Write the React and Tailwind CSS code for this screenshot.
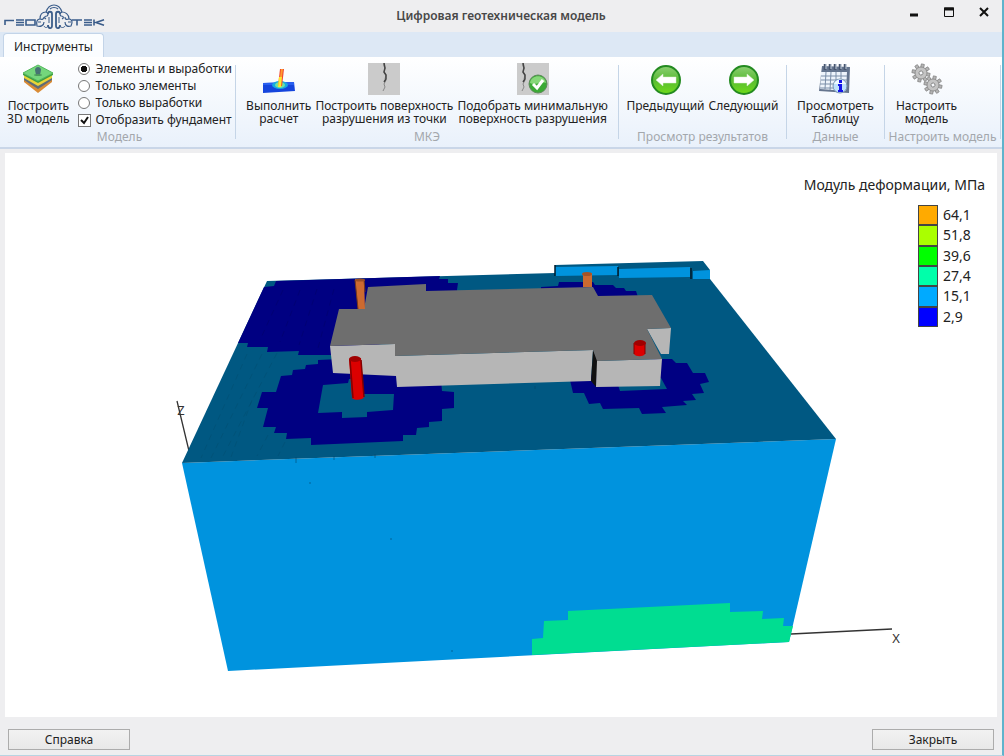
import React, { useState } from "react";

const legend = [
  { value: "64,1", color: "bg-[#ffaa00]" },
  { value: "51,8", color: "bg-[#aaff00]" },
  { value: "39,6", color: "bg-[#00ff00]" },
  { value: "27,4", color: "bg-[#00ffaa]" },
  { value: "15,1", color: "bg-[#00aaff]" },
  { value: "2,9", color: "bg-[#0000ff]" },
];

const viewModes = [
  { id: "all", label: "Элементы и выработки" },
  { id: "elements", label: "Только элементы" },
  { id: "holes", label: "Только выработки" },
];

function Logo() {
  return (
    <svg viewBox="0 0 102 26" className="h-[26px] w-[102px]" fill="none" stroke="#3a5c8a">
      <g strokeWidth="1.6">
        <path d="M1 21V16.500H10" />
        <path d="M12 16H20M12 18.500H20M12 21H20" />
        <path d="M22 16H31V21H22Z" />
        <path d="M68 16H78M73 16V21.500" />
        <path d="M80 16H88M80 18.500H88M80 21H88" />
        <path d="M90 15.500V21.500M100 15.800L92 18.500L100 21.200" />
      </g>
      <g strokeWidth="1.200">
        {/* dome over the two lobes */}
        <path d="M36 15C36 10 39 8 42 8C44 2 47 1 50 1C53 1 56 2 58 8C61 8 65 10 65 15" />
        <path d="M36 15C33 15 32 18 33 22C36 23 40 22 40 18M65 15C68 15 69 18 67 22C64 23 61 22 61 18" />
        <path d="M34 18H37M64 18H67M42 8C44 9 45 10 43 12C40 12 40 14 42 15M58 8C56 9 55 10 57 12C60 12 60 14 58 15" />
        <path d="M36 15C38 16 40 15 40 13M65 15C62 16 61 15 61 13M46 5C48 3 52 3 54 5" />
      </g>
      <path d="M44 21C44 25 48 25 48 22V10C48 7 44 7 44 10M56 21C56 25 52 25 52 22V10C52 7 56 7 56 10" strokeWidth="1.800" />
      <path d="M40 22C41 24 43 24 44 22M61 22C60 24 57 24 56 22M45 13V19M55 13V19" />
    </svg>
  );
}

function SoilIcon() {
  return (
    <svg viewBox="0 0 32 32" className="size-8">
      <path d="M2 19L16 30L30 19V14L16 20L2 14Z" fill="#d98b35" />
      <path d="M2 17L16 26L30 17V13L16 22L2 13Z" fill="#5e6c78" />
      <path d="M2 15L16 23L30 15V11L16 19L2 11Z" fill="#e8d438" />
      <path d="M1 12L16 20L31 12V10L16 17L1 10Z" fill="#3f9d45" />
      <path d="M1 10L16 2L31 10L16 18Z" fill="#74d67c" stroke="#54b95d" />
      <path d="M13 7C13 3 19 3 19 7L18 12H14Z" fill="#477273" />
      <ellipse cx="16" cy="12" rx="4" ry="1" fill="#4c9b5c" />
    </svg>
  );
}

function RunIcon() {
  return (
    <svg viewBox="0 0 32 32" className="size-8">
      <path d="M0 20L31 19L32 28L0 30Z" fill="#1545dd" />
      <path d="M0 20L31 19L31 22L0 22Z" fill="#285ff0" />
      <ellipse cx="17" cy="22" rx="8" ry="4" fill="#18a9e0" />
      <ellipse cx="17" cy="22" rx="5" ry="3" fill="#72e2a0" />
      <path d="M17 6L21 6L19 23H15Z" fill="#f0442c" />
      <path d="M16 14L19 14L18 24H15Z" fill="#ffe92e" />
      <path d="M18 6L20 6L19 14H17Z" fill="#ff9b30" />
    </svg>
  );
}

function CrackIcon({ ok }) {
  return (
    <svg viewBox="0 0 32 32" className="size-8">
      <rect width="32" height="32" fill="#cbcbcb" />
      {/* the crack moves left to make room for the tick */}
      <g transform={ok ? "translate(-10 0)" : undefined} fill="none">
        <path d="M16 0L16 3L17 5L16 9L18 12L17 16L18 17L16 21L17 24L15 28" stroke="#888" strokeWidth="1" />
        <path d="M16 0L17 5L16 9L18 12L18 16L16 19" stroke="#444" strokeWidth="1.500" />
      </g>
      {ok && (
        <g>
          <circle cx="21" cy="21" r="9" fill="#3ba936" stroke="#5d8b5a" />
          <path d="M13 20C14 11 28 11 29 20C24 18 18 23 13 20Z" fill="#86d779" />
          <path d="M16 21L20 25L26 17" fill="none" stroke="white" strokeWidth="3" />
        </g>
      )}
    </svg>
  );
}

function ArrowIcon({ right }) {
  return (
    <svg viewBox="0 0 32 32" className="size-8">
      <defs>
        <linearGradient id={right ? "goRight" : "goLeft"} x1="0" y1="0" x2="0" y2="1">
          <stop offset="0" stopColor="#8ccf72" />
          <stop offset="0.5" stopColor="#5abb35" />
          <stop offset="1" stopColor="#6fdb18" />
        </linearGradient>
      </defs>
      <circle cx="16" cy="17" r="14" fill={right ? "url(#goRight)" : "url(#goLeft)"} stroke="#238a20" strokeWidth="2" />
      <path
        d="M6 17L13 11V14H26V20H13V23Z"
        transform={right ? "translate(32 0) scale(-1 1)" : undefined}
        fill="white"
        stroke="#d9efcf"
        strokeWidth="0.5"
      />
    </svg>
  );
}

function TableIcon() {
  return (
    <svg viewBox="0 0 32 32" className="size-8">
      <path d="M3 3L31 4L30 30L0 28Z" fill="#65758e" />
      <path d="M2 9L28 9L27 28L1 26Z" fill="#eef4fb" />
      <path d="M2 13H28M2 17H28M1 21H27M1 25H27M7 9L6 26M12 9L11 27M17 9V27M22 9V27" stroke="#7a8ea8" fill="none" />
      <path d="M6 1V7M11 1V7M16 1V7M21 1V7M26 1V7" stroke="#47566f" strokeWidth="2.500" />
      <path d="M7 1V6M12 1V6M17 1V6M22 1V6M27 1V6" stroke="#c6d1df" />
      <circle cx="21" cy="23" r="7" fill="#bfe2fb" stroke="#7893b0" />
      <path d="M15 21C17 15 25 15 27 21Z" fill="#eef8ff" />
      <path d="M20 17H23V20H20ZM19 21H23V27H24V29H19V27H20V23H19Z" fill="#1414e8" />
    </svg>
  );
}

function Gear({ x, y, r }) {
  return (
    <g transform={`translate(${x} ${y}) rotate(12)`}>
      {[0, 45, 90, 135, 180, 225, 270, 315].map((a) => (
        <rect key={a} x="-1.500" y={-r - 3} width="3" height="4" transform={`rotate(${a})`} fill="#b6b6b6" stroke="#858585" strokeWidth="0.8" />
      ))}
      <circle r={r} fill="#c4c4c4" stroke="#8a8a8a" strokeWidth="0.8" />
      <circle r="2" fill="#f7f9fc" stroke="#777" strokeWidth="0.8" />
    </g>
  );
}

function GearsIcon() {
  return (
    <svg viewBox="0 0 32 32" className="size-8">
      <Gear x={10} y={10} r={6} />
      <Gear x={22} y={22} r={6} />
    </svg>
  );
}

function RibbonButton({ icon, lines, className }) {
  return (
    <button className={`flex shrink-0 flex-col items-center whitespace-nowrap pt-[3px] text-[12px] leading-[13px] text-[#222] ${className || ""}`}>
      {icon}
      <span className="mt-1">
        {lines.map((line) => (
          <span key={line} className="block">
            {line}
          </span>
        ))}
      </span>
    </button>
  );
}

function RibbonGroup({ title, className, children }) {
  return (
    <>
      <section className={`flex shrink-0 flex-col justify-between pt-[3px] pb-[2px] ${className}`}>
        <div className="flex items-start justify-center gap-1">{children}</div>
        <h2 className="text-center text-[12px] leading-4 whitespace-nowrap text-[#a3a7ac]">{title}</h2>
      </section>
      <div className="my-2 w-px shrink-0 bg-[#c5d5e7]" />
    </>
  );
}

function Scene() {
  return (
    <svg viewBox="5 153 992 564" className="block min-h-0 w-full flex-1" role="img" aria-label="3D модель грунтового массива">
      {/* axes */}
      <path d="M177 401L189 451M791 634L892 629" stroke="#333" strokeWidth="1.300" />
      <g fontSize="13" fill="#333" textAnchor="middle">
        <text x="181" y="415">Z</text>
        <text x="896" y="643">X</text>
      </g>

      {/* soil block */}
      <path d="M182 463L836 439L789 642L228 671Z" fill="#0093de" />
      <path d="M532 655V639L543 638L544 621L568 620V611L730 603V612L763 611L762 619L784 618L783 626L793 626L789 642Z" fill="#00dd91" />
      <path d="M267 281L555 273L710 279L836 439L182 463Z" fill="#005882" />

      {/* soft zones on the top face */}
      <g fill="#000082">
        <path d="M276 281L274 286L264 287L238 343L248 343L247 347L268 347L267 352L299 351L298 355L345 355L460 320L457 290L458 283L448 283V279L439 279L440 276Z" />
        <path d="M340 359L318 360V364L306 365L305 369L293 370L292 375L281 376L276 392L262 392L257 408L268 408L263 427L276 427L274 433L287 433L286 439L311 438V445L403 441V435L416 435L417 428L429 427V422L442 421V409L454 408V392L442 391L441 380L397 370Z" />
        <path d="M541 290V287L558 286L559 282L593 282L595 285L613 285L616 288L624 288L626 291L636 291L638 297L590 300Z" />
        <path d="M655 359L672 359L676 363L687 363L693 373L705 373L709 382L700 384L704 393L692 394L696 400L683 401L687 405L662 407L666 413L642 414L639 408L603 409L600 403L589 404L584 393L573 393L570 380Z" />
      </g>
      <path d="M323 385L348 383L349 379L363 379V394L394 394L393 410L367 412V417L342 418V412L318 413ZM618 385L620 391L667 389L661 378Z" fill="#005882" />

      {/* mesh lines that show through */}
      <g stroke="#004969" strokeWidth="0.6" strokeDasharray="6 5" opacity="0.6" fill="none">
        <path d="M247 354L201 458M262 354L211 458M277 353L222 458M252 400L231 457M268 435L257 456M285 442L278 456" />
        <path d="M283 290L260 340M300 290L280 342M317 289L299 345M334 289L318 348" stroke="#00005e" />
      </g>
      <path d="M296 457V463M334 456V460M375 454V458M535 386V389M310 482V484M452 650V652M391 538V540" stroke="#00486a" strokeOpacity="0.6" />

      {/* strip along the far edge */}
      <path d="M555 265L703 261L710 270V279L692 279L618 277L555 276Z" fill="#005882" />
      <path d="M555 267L618 266V275L555 276ZM619 269L690 267V277L619 278ZM693 271L710 270V279L693 279Z" fill="#0093de" />
      <path d="M555 265V276M618 267V276M691 268V279" stroke="#001b2b" strokeWidth="1.500" />

      {/* foundation */}
      <path d="M330 346L395 344V356L593 350L591 381L397 387L396 376L333 373Z" fill="#b6b6b6" />
      <path d="M593 350L598 361L596 387L591 381Z" fill="#111" />
      <path d="M597 361L662 359L660 386L596 387ZM647 329L671 328L669 354L661 354Z" fill="#b6b6b6" />
      <path d="M368 287L426 284V291L593 287L598 296L652 295L671 328L647 329L662 359L597 361L593 350L395 356V344L330 346L339 309L364 309Z" fill="#6e6e6e" />

      {/* boreholes */}
      <path d="M355 279H364L365 309H358Z" fill="#cc6a30" />
      <path d="M355 280L358 309M364 280L365 292" stroke="#793b17" />
      <ellipse cx="360" cy="280" rx="5" ry="1.500" fill="#9a4f24" />
      <path d="M583 273H592V287H583Z" fill="#cc6a30" />
      <ellipse cx="587" cy="274" rx="5" ry="2" fill="#a55326" />
      <path d="M349 359L361 358L364 397C363 400 354 401 352 398Z" fill="#dc0000" />
      <path d="M350 360L353 398M361 360L364 397" stroke="#820000" strokeWidth="1.500" />
      <ellipse cx="355" cy="359" rx="6" ry="3" fill="#a00000" />
      <path d="M634 343H645V354C643 357 636 357 634 354Z" fill="#dc0000" />
      <path d="M634 343V354M645 343V354" stroke="#820000" />
      <ellipse cx="640" cy="343" rx="6" ry="3" fill="#a00000" />
    </svg>
  );
}

export default function App() {
  const [mode, setMode] = useState("all");
  const [foundation, setFoundation] = useState(true);

  return (
    <div className="flex h-screen flex-col overflow-hidden border-r-2 border-b border-r-[#5fb3cc] border-b-[#b7d4e2] bg-[#eeeef0] font-['Noto_Sans','Open_Sans',sans-serif] text-[#222]">
      <header className="grid h-8 shrink-0 grid-cols-[1fr_auto_1fr] items-center">
        <div className="pt-[2px] pl-1">
          <Logo />
        </div>
        <h1 className="text-[12px] font-semibold text-[#484848]">Цифровая геотехническая модель</h1>
        <div className="mb-2 flex justify-end gap-[15px] pr-2">
          <button aria-label="Свернуть" className="flex size-5 items-center justify-center">
            <svg viewBox="0 0 12 12" className="size-3">
              <path d="M2 9H10" stroke="#111" strokeWidth="3" />
            </svg>
          </button>
          <button aria-label="Развернуть" className="flex size-5 items-center justify-center">
            <svg viewBox="0 0 12 12" className="size-3">
              <path d="M1.500 2H10.500V10.500H1.500Z" fill="none" stroke="#111" />
              <path d="M1 3H11" stroke="#111" strokeWidth="3" />
            </svg>
          </button>
          <button aria-label="Закрыть окно" className="flex size-5 items-center justify-center">
            <svg viewBox="0 0 12 12" className="size-3">
              <path d="M2 2L10 10M10 2L2 10" stroke="#111" strokeWidth="2" />
            </svg>
          </button>
        </div>
      </header>

      <nav className="flex h-[25px] shrink-0 items-end bg-[#dde8f5] pl-[3px]">
        <button className="h-6 rounded-t border border-b-0 border-[#c3d4e8] bg-[#fbfdff] px-[10px] pt-[2px] text-[12px] leading-5">Инструменты</button>
      </nav>

      <div className="flex h-[92px] shrink-0 border-b-2 border-[#c9d6e8] bg-linear-to-b from-white to-[#e9f1fb]">
        <RibbonGroup title="Модель" className="w-[235px] pl-1">
          <RibbonButton icon={<SoilIcon />} lines={["Построить", "3D модель"]} className="mr-1" />
          <div className="flex flex-col">
            {viewModes.map((m) => (
              <label key={m.id} className="flex h-[17px] items-center gap-[6px] text-[12px] leading-4 whitespace-nowrap">
                <input
                  type="radio"
                  name="mode"
                  checked={mode === m.id}
                  onChange={() => setMode(m.id)}
                  className="size-3 shrink-0 appearance-none rounded-full border border-[#777] bg-white checked:bg-[radial-gradient(circle,#111_0_3px,white_3px)]"
                />
                {m.label}
              </label>
            ))}
            <label className="flex h-[18px] items-center gap-[5px] text-[12px] leading-4 whitespace-nowrap">
              <span className="relative flex">
                <input
                  type="checkbox"
                  checked={foundation}
                  onChange={(e) => setFoundation(e.target.checked)}
                  className="peer size-[13px] appearance-none border border-[#777] bg-white"
                />
                <svg viewBox="0 0 13 13" className="pointer-events-none absolute inset-0 hidden size-[13px] peer-checked:block">
                  <path d="M3 6L6 9L10 3" fill="none" stroke="#111" strokeWidth="2" />
                </svg>
              </span>
              Отобразить фундамент
            </label>
          </div>
        </RibbonGroup>

        <RibbonGroup title="МКЭ" className="w-[382px]">
          <RibbonButton icon={<RunIcon />} lines={["Выполнить", "расчет"]} />
          <RibbonButton icon={<CrackIcon />} lines={["Построить поверхность", "разрушения из точки"]} />
          <RibbonButton icon={<CrackIcon ok />} lines={["Подобрать минимальную", "поверхность разрушения"]} />
        </RibbonGroup>

        <RibbonGroup title="Просмотр результатов" className="w-[167px]">
          <RibbonButton icon={<ArrowIcon />} lines={["Предыдущий"]} />
          <RibbonButton icon={<ArrowIcon right />} lines={["Следующий"]} />
        </RibbonGroup>

        <RibbonGroup title="Данные" className="w-[97px]">
          <RibbonButton icon={<TableIcon />} lines={["Просмотреть", "таблицу"]} />
        </RibbonGroup>

        <RibbonGroup title="Настроить модель" className="w-[115px]">
          <RibbonButton icon={<GearsIcon />} lines={["Настроить", "модель"]} className="mr-8" />
        </RibbonGroup>
      </div>

      <main className="relative mx-[5px] mt-1 flex min-h-0 flex-1 flex-col bg-white">
        <Scene />
        <aside className="absolute top-6 right-3 flex flex-col items-end">
          <h2 className="text-[14px] leading-4">Модуль деформации, МПа</h2>
          <ul className="mt-3 mr-3 flex h-[122px] flex-col">
            {legend.map((row) => (
              <li key={row.value} className="flex flex-1 items-center gap-[5px] text-[14px] leading-5">
                <span className={`h-full w-5 border border-[#444] ${row.color}`} />
                <span className="w-[30px]">{row.value}</span>
              </li>
            ))}
          </ul>
        </aside>
      </main>

      <footer className="flex h-[38px] shrink-0 items-center justify-between px-2 pt-[7px]">
        <button className="h-[21px] w-[122px] border border-[#acacac] bg-linear-to-b from-[#f2f2f2] to-[#e8e8e8] text-[12px] leading-4">Справка</button>
        <button className="h-[21px] w-[122px] border border-[#acacac] bg-linear-to-b from-[#f2f2f2] to-[#e8e8e8] text-[12px] leading-4">Закрыть</button>
      </footer>
    </div>
  );
}
